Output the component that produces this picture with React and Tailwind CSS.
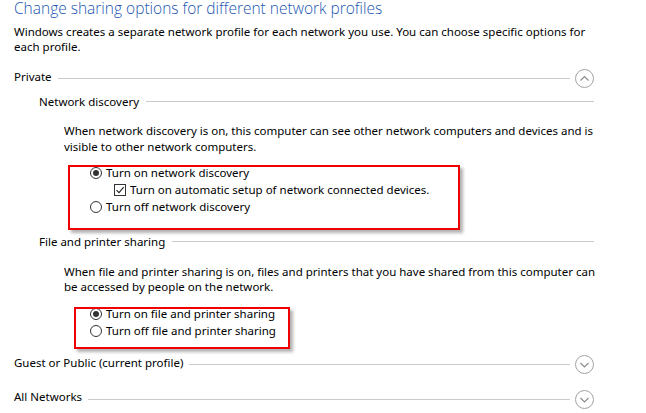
const body = { fontFamily: "'Noto Sans', 'Open Sans', sans-serif" };

function Chevron({ up }) {
  return (
    <svg width="19" height="19" viewBox="0 0 19 19" className="shrink-0">
      <circle cx="9.5" cy="9.5" r="9" fill="white" stroke="#a3a3a3" strokeWidth="1" />
      <path d={up ? "M5.5 11.5 L9.5 7.5 L13.5 11.5" : "M5.5 8 L9.5 12 L13.5 8"} fill="none" stroke="#8c8c8c" strokeWidth="1.2" />
    </svg>
  );
}

function ProfileRow({ label, up, lift, className }) {
  return (
    <div className={`flex items-center h-[19px] pr-[52px] ${className}`}>
      <span className={`text-[11.5px] leading-[15px] text-black whitespace-nowrap ${lift}`}>{label}</span>
      <div className="flex-1 h-px bg-[#cacaca] ml-[6px] mr-[5px]" />
      <Chevron up={up} />
    </div>
  );
}

function SubHeader({ label, className }) {
  return (
    <div className={`flex items-center h-[15px] pl-[25px] pr-[52px] ${className}`}>
      <span className="text-[11.5px] leading-[15px] text-black whitespace-nowrap">{label}</span>
      <div className="flex-1 h-px bg-[#cacaca] ml-[7px]" />
    </div>
  );
}

function Radio({ checked }) {
  return (
    <span className="w-[12px] h-[12px] rounded-full border border-[#333] bg-white flex items-center justify-center shrink-0">
      {checked && <span className="w-[6px] h-[6px] rounded-full bg-[#333]" />}
    </span>
  );
}

function Check() {
  return (
    <span className="w-[12px] h-[12px] border border-[#333] bg-white flex items-center justify-center shrink-0">
      <svg width="10" height="10" viewBox="0 0 10 10">
        <path d="M1.5 5.2 L4 7.7 L8.7 2.2" fill="none" stroke="#222" strokeWidth="1.1" />
      </svg>
    </span>
  );
}

function Option({ control, label, indent }) {
  return (
    <div className={`flex items-center h-[17px] ${indent}`}>
      {control}
      <span className="ml-[4px] text-[11.5px] leading-[17px] text-black whitespace-nowrap">{label}</span>
    </div>
  );
}

export default function App() {
  return (
    <div className="w-[646px] h-[413px] bg-white overflow-hidden" style={body}>
      <div className="pl-[14px]">
        <h1
          className="text-[15.5px] leading-[16px] font-light text-[#1a56b0] whitespace-nowrap"
          style={{ fontFamily: "'Open Sans', 'Noto Sans', sans-serif" }}
        >
          Change sharing options for different network profiles
        </h1>
        <p className="mt-[8px] w-[580px] text-[11.5px] leading-[15px] text-black">
          Windows creates a separate network profile for each network you use. You can choose specific options for each profile.
        </p>
      </div>

      <div className="pl-[14px]">
        <ProfileRow label="Private" up lift="mb-[4px]" className="mt-[15px]" />
        <SubHeader label="Network discovery" className="mt-[6px]" />

        <div className="pl-[50px]">
          <p className="mt-[14px] w-[533px] text-[11.5px] leading-[16px] text-black">
            When network discovery is on, this computer can see other network computers and devices and is visible to other network computers.
          </p>

          <div className="relative mt-[9px]">
            <Option indent="pl-[26px]" control={<Radio checked />} label="Turn on network discovery" />
            <Option indent="pl-[50px]" control={<Check />} label="Turn on automatic setup of network connected devices." />
            <Option indent="pl-[26px]" control={<Radio />} label="Turn off network discovery" />
            <div className="absolute left-[4px] top-[1px] w-[392px] h-[65px] border-2 border-[#f00000] shadow-[3px_3px_3px_rgba(0,0,0,0.3)] pointer-events-none" />
          </div>
        </div>

        <SubHeader label="File and printer sharing" className="mt-[19px]" />

        <div className="pl-[50px]">
          <p className="mt-[15px] w-[533px] text-[11.5px] leading-[15px] text-black">
            When file and printer sharing is on, files and printers that you have shared from this computer can be accessed by people on the network.
          </p>

          <div className="relative mt-[11px]">
            <Option indent="pl-[26px]" control={<Radio checked />} label="Turn on file and printer sharing" />
            <Option indent="pl-[26px]" control={<Radio />} label="Turn off file and printer sharing" />
            <div className="absolute left-[10px] top-[1.5px] w-[216px] h-[42px] border-2 border-[#f00000] shadow-[3px_3px_3px_rgba(0,0,0,0.3)] pointer-events-none" />
          </div>
        </div>

        <ProfileRow label="Guest or Public (current profile)" lift="mb-[4px]" className="mt-[16px]" />
        <ProfileRow label="All Networks" lift="mb-[6px]" className="mt-[16px]" />
      </div>
    </div>
  );
}
